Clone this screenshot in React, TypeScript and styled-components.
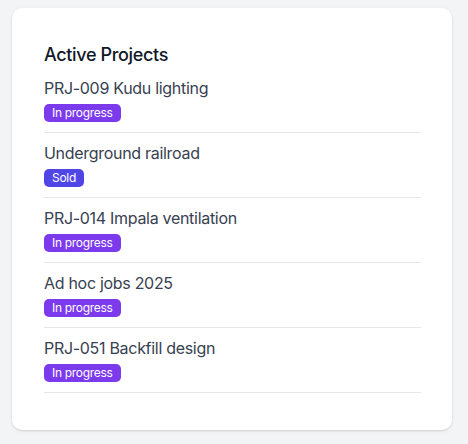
import React from "react";
import styled, { createGlobalStyle } from "styled-components";

const Global = createGlobalStyle`
  html, body { margin: 0; padding: 0; background: #f3f4f6; }
  body { font-family: "Inter", "Noto Sans", sans-serif; }
`;

const Page = styled.div`
  padding: 8px 16px 14px 12px;
`;

const Card = styled.section`
  background: #ffffff;
  border-radius: 10px;
  box-shadow: 0 1px 3px rgba(0, 0, 0, 0.1), 0 1px 2px rgba(0, 0, 0, 0.06);
  padding: 35px 31px 37px 32px;
`;

const Title = styled.h2`
  margin: 0 0 11px;
  font-size: 18px;
  font-weight: 500;
  line-height: 24px;
  color: #111827;
  letter-spacing: -0.35px;
`;

const List = styled.ul`
  list-style: none;
  margin: 0;
  padding: 0;
`;

const Item = styled.li`
  display: flex;
  flex-direction: column;
  align-items: flex-start;
  gap: 5px;
  padding: 0 0 10px;
  margin-bottom: 10px;
  border-bottom: 1px solid #e5e7eb;
  &:last-child { margin-bottom: 0; }
`;

const Name = styled.span`
  font-size: 16px;
  line-height: 21px;
  color: #374151;
  letter-spacing: -0.3px;
`;

const Badge = styled.span<{ $tone: "progress" | "sold" }>`
  display: inline-block;
  padding: 0 8px;
  height: 18px;
  line-height: 18px;
  border-radius: 5px;
  font-size: 12px;
  font-weight: 400;
  letter-spacing: -0.3px;
  color: #ffffff;
  background: ${(p) => (p.$tone === "sold" ? "#4f46e5" : "#7c3aed")};
`;

const projects: { name: string; status: string; tone: "progress" | "sold" }[] = [
  { name: "PRJ-009 Kudu lighting", status: "In progress", tone: "progress" },
  { name: "Underground railroad", status: "Sold", tone: "sold" },
  { name: "PRJ-014 Impala ventilation", status: "In progress", tone: "progress" },
  { name: "Ad hoc jobs 2025", status: "In progress", tone: "progress" },
  { name: "PRJ-051 Backfill design", status: "In progress", tone: "progress" },
];

export default function App() {
  return (
    <>
      <Global />
      <Page>
        <Card>
          <Title>Active Projects</Title>
          <List>
            {projects.map((p) => (
              <Item key={p.name}>
                <Name>{p.name}</Name>
                <Badge $tone={p.tone}>{p.status}</Badge>
              </Item>
            ))}
          </List>
        </Card>
      </Page>
    </>
  );
}
